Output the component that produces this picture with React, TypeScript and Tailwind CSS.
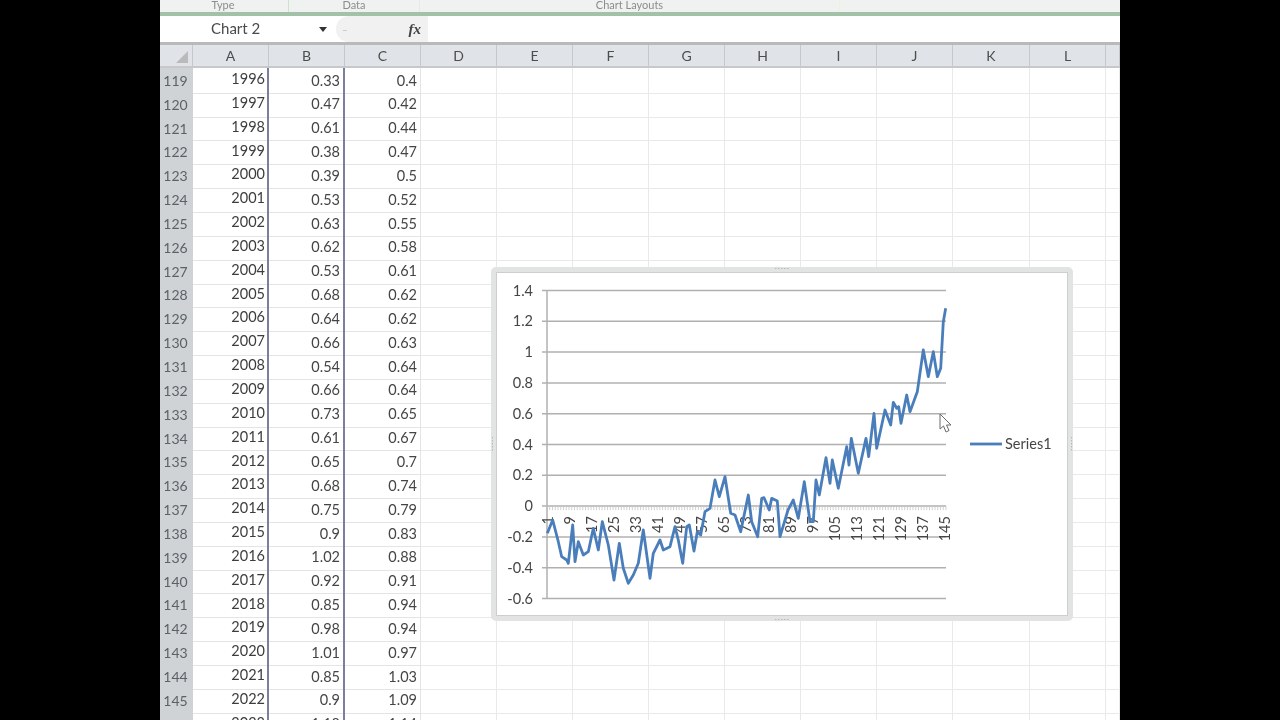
import React from "react";

const rows: [number, string, string, string][] = [
  [119, "1996", "0.33", "0.4"], [120, "1997", "0.47", "0.42"], [121, "1998", "0.61", "0.44"],
  [122, "1999", "0.38", "0.47"], [123, "2000", "0.39", "0.5"], [124, "2001", "0.53", "0.52"],
  [125, "2002", "0.63", "0.55"], [126, "2003", "0.62", "0.58"], [127, "2004", "0.53", "0.61"],
  [128, "2005", "0.68", "0.62"], [129, "2006", "0.64", "0.62"], [130, "2007", "0.66", "0.63"],
  [131, "2008", "0.54", "0.64"], [132, "2009", "0.66", "0.64"], [133, "2010", "0.73", "0.65"],
  [134, "2011", "0.61", "0.67"], [135, "2012", "0.65", "0.7"], [136, "2013", "0.68", "0.74"],
  [137, "2014", "0.75", "0.79"], [138, "2015", "0.9", "0.83"], [139, "2016", "1.02", "0.88"],
  [140, "2017", "0.92", "0.91"], [141, "2018", "0.85", "0.94"], [142, "2019", "0.98", "0.94"],
  [143, "2020", "1.01", "0.97"], [144, "2021", "0.85", "1.03"], [145, "2022", "0.9", "1.09"],
  [146, "2023", "1.18", "1.14"],
];

const letters = ["A", "B", "C", "D", "E", "F", "G", "H", "I", "J", "K", "L", ""];
const blanks = ["D", "E", "F", "G", "H", "I", "J", "K", "L", "M"];
const colsClass = "grid grid-cols-[33px_76px_76px_76px_76px_76px_76px_76px_76px_76px_76px_77px_76px_14px]";

const leftPts = [[172,805],[188,765],[205,830],[215,875],[230,885],[235,895],[248,780],[255,890],[265,830],[280,870],[295,860],[310,790],[325,855],[337,770],[355,840],[372,945],[388,835],[400,910],[415,955],[430,930],[445,895],[460,795],[480,940],[490,865],[510,825],[520,855],[540,845],[555,785],[565,825],[578,895],[590,785],[598,780],[612,858],[622,800],[632,810],[645,740],[660,730],[675,645],[688,695],[705,635],[722,745],[735,750],[752,800],[775,690],[785,770],[803,815],[815,700],[822,698],[838,735],[845,700],[862,708],[870,815]];
const rightPts = [[24,735],[40,705],[55,760],[73,650],[90,770],[100,770],[108,645],[118,690],[138,578],[150,655],[157,585],[175,670],[200,545],[207,600],[214,520],[235,625],[258,520],[266,575],[282,445],[290,550],[315,435],[332,480],[340,412],[350,430],[356,425],[363,475],[380,390],[390,440],[412,380],[430,255],[445,335],[460,260],[472,335],[482,310],[490,170],[497,130]];
// Chart box origin is (491, 267) on the page.
const line = [
  ...leftPts.map(([x, y]) => [490 + x / 3 - 491, 265 + y / 3 - 267]),
  ...rightPts.map(([x, y]) => [780 + x / 3 - 491, 265 + y / 3 - 267]),
].map(([x, y]) => `${x.toFixed(1)},${y.toFixed(1)}`).join(" ");

const yLabels = ["1.4", "1.2", "1", "0.8", "0.6", "0.4", "0.2", "0", "-0.2", "-0.4", "-0.6"];
const xLabels = ["1", "9", "17", "25", "33", "41", "49", "57", "65", "73", "81", "89", "97", "105", "113", "121", "129", "137", "145"];
const plotL = 56, plotR = 455, plotT = 23.5, step = 30.8;
const zeroY = plotT + 7 * step;

function Chart() {
  const ticks = Array.from({ length: 146 }, (_, i) => plotL + (i * (plotR - plotL)) / 145);
  return (
    <div className="absolute left-[331px] top-[222px] w-[582px] h-[354px] bg-white border-[5px] border-[#e2e4e4] rounded-[5px] shadow-[inset_0_0_0_1px_#cdcfcf]">
      <svg className="absolute left-[-5px] top-[-5px]" width="582" height="354" viewBox="0 0 582 354" fontFamily="Lato, 'Liberation Sans', sans-serif">
        {yLabels.map((l, i) => (
          <g key={l}>
            <line x1={plotL - 5} x2={plotR} y1={plotT + i * step} y2={plotT + i * step} stroke="#b0b0b0" strokeWidth="1.5" />
            <text x={plotL - 14} y={plotT + i * step + 5} textAnchor="end" fontSize="14.5" fill="#454545">{l}</text>
          </g>
        ))}
        <line x1={plotL} x2={plotL} y1={plotT} y2={plotT + 10 * step} stroke="#b0b0b0" strokeWidth="1.5" />
        {ticks.map((x, i) => (
          <line key={i} x1={x} x2={x} y1={zeroY} y2={zeroY + 4} stroke="#c4c4c4" strokeWidth="0.8" />
        ))}
        {xLabels.map((l, i) => {
          const x = plotL + 2 + i * 22.05;
          return (
            <text key={l} transform={`translate(${x + 4},${zeroY + 10}) rotate(-90)`} textAnchor="end" fontSize="14.5" fill="#454545">{l}</text>
          );
        })}
        <polyline points={line} fill="none" stroke="#4a7ebb" strokeWidth="2.8" strokeLinejoin="round" />
        <line x1="479" x2="511" y1="177" y2="177" stroke="#4a7ebb" strokeWidth="2.8" />
        <text x="514" y="182" fontSize="14.5" fill="#454545">Series1</text>
        <path d="M449 147 L449 162 L452.5 159 L455 165 L458 163.5 L455.5 158 L460 158 Z" fill="#fff" stroke="#6a6a6a" strokeWidth="1" />
        <g stroke="#b8b8b8" strokeWidth="1" strokeDasharray="1.5 1.5">
          <line x1="284" x2="299" y1="1.5" y2="1.5" />
          <line x1="284" x2="299" y1="352.5" y2="352.5" />
          <line x1="1.5" x2="1.5" y1="170" y2="184" />
          <line x1="580.5" x2="580.5" y1="170" y2="184" />
        </g>
      </svg>
    </div>
  );
}

export default function App() {
  return (
    <div className="w-[1280px] h-[720px] bg-black flex justify-center overflow-hidden font-['Lato','Liberation_Sans',sans-serif] blur-[0.5px]">
      <div className="w-[960px] h-[720px] bg-white flex flex-col overflow-hidden text-[#454545]">
        <div className="h-[12px] shrink-0 bg-[#f0f1f1] grid grid-cols-[129px_131px_420px_1fr] text-[11px] leading-[10px] text-[#8c8c8c] overflow-hidden">
          <div className="border-r border-[#cfe3c8] text-center pr-[2px]">Type</div>
          <div className="border-r border-[#e8e8e8] text-center">Data</div>
          <div className="border-r border-[#f3f0d8] text-center">Chart Layouts</div>
          <div />
        </div>
        <div className="h-[4px] shrink-0 bg-[#a3c0a8]" />
        <div className="h-[26px] shrink-0 flex items-center bg-white">
          <div className="w-[169px] flex items-center justify-between pl-[51px] pr-[2px]">
            <span className="text-[15px] leading-[20px] pb-[2px] text-[#4a4a4a]">Chart 2</span>
            <span className="w-0 h-0 border-x-[4px] border-x-transparent border-t-[5px] border-t-[#333333]" />
          </div>
          <div className="ml-[7px] w-[92px] h-[26px] bg-[#f1f1f1] rounded-l-[13px] flex items-center justify-between pl-[6px] pr-[7px]">
            <span className="text-[10px] text-[#bbbbbb]">–</span>
            <span className="text-[15px] italic font-bold text-[#444444] font-['Liberation_Serif',serif]">fx</span>
          </div>
        </div>
        <div className="h-[3px] shrink-0 bg-[#b9b9b9]" />
        <div className="relative flex-1">
          <div className={`${colsClass} h-[23px] bg-[#e0e3e7] border-b-2 border-[#c6c8ca] text-[14px] text-[#4d4d4d]`}>
            <div className="border-r border-[#c6c8ca] flex items-end justify-end pr-[4px] pb-[3px]">
              <span className="w-0 h-0 border-l-[12px] border-l-transparent border-b-[12px] border-b-[#b8babc]" />
            </div>
            {letters.map((l, i) => (
              <div key={i} className="border-r border-[#c6c8ca] flex items-center justify-center">{l}</div>
            ))}
          </div>
          {rows.map(([n, y, b, c]) => (
            <div key={n} className={`${colsClass} h-[23.85px] text-[14.5px]`}>
              <div className="bg-[#d0d3d5] border-b border-[#e3e4e5] flex items-center justify-center pr-[2px] text-[#5a6268] text-[14px]">{n}</div>
              <div className="border-b border-[#e3e4e5] border-r-2 border-r-[#7d7d9e] flex items-center justify-end pr-[2px] pb-[3px] text-[#3d3d3d]">{y}</div>
              <div className="border-b border-[#e3e4e5] border-r-2 border-r-[#7d7d9e] flex items-center justify-end pr-[3px]">{b}</div>
              <div className="border-b border-r border-[#e3e4e5] flex items-center justify-end pr-[3px]">{c}</div>
              {blanks.map((k) => (
                <div key={k} className="border-b border-r border-[#e8e9e9]" />
              ))}
            </div>
          ))}
          <Chart />
        </div>
      </div>
    </div>
  );
}
